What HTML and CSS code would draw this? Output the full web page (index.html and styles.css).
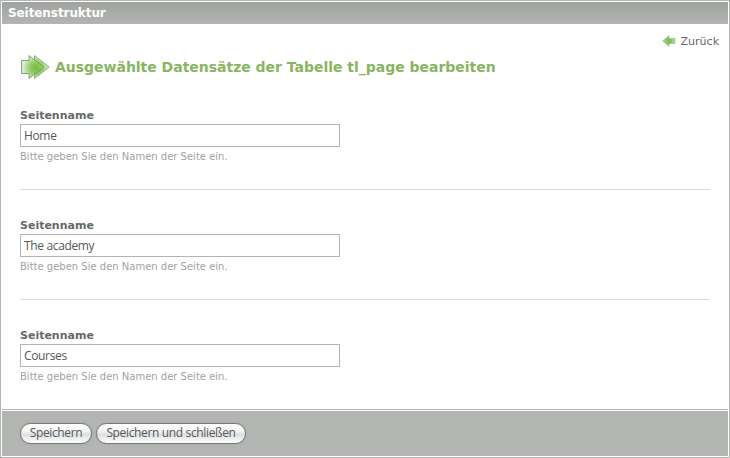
FILE: index.html
```html
<!DOCTYPE html>
<html lang="de">
<head>
<meta charset="utf-8">
<title>Seitenstruktur</title>
<link rel="stylesheet" href="styles.css">
</head>
<body>
<form class="panel">
  <h1 class="bar"><span>Seitenstruktur</span></h1>
  <main class="content">
    <div class="back"><svg width="14" height="12" viewBox="0 0 14 12"><defs><linearGradient id="b"><stop offset="0" stop-color="#a9d391"/><stop offset=".55" stop-color="#79bc52"/><stop offset="1" stop-color="#b9dca6"/></linearGradient></defs><path d="M.7 6 7 .7V3.500h6v5H7v2.800z" fill="url(#b)" stroke="#a3bf95" stroke-width=".8"/></svg><a class="back-text">Zurück</a></div>
    <h2 class="heading"><svg width="30" height="26" viewBox="0 0 30 26"><defs><radialGradient id="g" gradientUnits="userSpaceOnUse" cx="16" cy="14" r="13"><stop offset="0" stop-color="#76bd35"/><stop offset=".45" stop-color="#93cb66"/><stop offset="1" stop-color="#d9ebd0"/></radialGradient></defs><path d="M14.500 1.500 29.300 13 14.500 24.500z" fill="url(#g)" stroke="#7ea36c" stroke-width=".8"/><path d="M1.500 6.500h7.500v-5L24 13 9 24.500v-5H1.500z" fill="url(#g)" stroke="#6d9260" stroke-width=".8"/></svg><span>Ausgewählte Datensätze der Tabelle tl_page bearbeiten</span></h2>
    <section class="field"><label for="p1"><span>Seitenname</span></label><div class="input" id="p1"><span>Home</span></div><p><span>Bitte geben Sie den Namen der Seite ein.</span></p></section>
    <section class="field"><label for="p2"><span>Seitenname</span></label><div class="input" id="p2"><span>The academy</span></div><p><span>Bitte geben Sie den Namen der Seite ein.</span></p></section>
    <section class="field"><label for="p3"><span>Seitenname</span></label><div class="input" id="p3"><span>Courses</span></div><p><span>Bitte geben Sie den Namen der Seite ein.</span></p></section>
  </main>
  <footer class="actions"><button type="button" class="save">Speichern</button><button type="button" class="save-close">Speichern und schließen</button></footer>
</form>
</body>
</html>
```
FILE: styles.css
```css
* { box-sizing: border-box; }
body { margin: 0; background: #fff; color: #666966; font-family: "DejaVu Sans", Verdana, sans-serif; }
h1, h2, p { margin: 0; }
svg { display: block; flex: none; }
.panel { width: 730px; height: 458px; border: 1px solid #b3b5b3; padding: 1px; display: flex; flex-direction: column; }
.bar { height: 22px; padding-left: 6px; background: linear-gradient(#a1a3a1, #b3b5b2); color: #fff; font-size: 12px; line-height: 22px; letter-spacing: -0.08px; }
.content { height: 385px; padding: 0 18px; }
.back { height: 34px; margin-right: -9px; display: flex; justify-content: flex-end; align-items: center; gap: 5px; font-size: 11px; }
.heading { height: 26px; margin-top: -4px; display: flex; align-items: center; gap: 5px; color: #89b562; font-size: 14px; white-space: nowrap; letter-spacing: -0.02px; }
.field { height: 110px; border-bottom: 1px solid #d9dad9; padding-top: 28px; white-space: nowrap; }
.field:last-child { border-bottom: 0; }
.field label { display: block; height: 16px; font-size: 11px; line-height: 16px; font-weight: bold; }
.input { width: 320px; height: 23px; border: 1px solid #b3b5b3; padding-left: 3px; font: 12px/21px "Open Sans", sans-serif; letter-spacing: -0.35px; color: #555955; }
.field p { height: 20px; font-size: 10px; line-height: 20px; color: #a0a3a0; }
.actions { height: 47px; border-top: 1px solid #b3b5b3; padding: 13px 18px 0; background: #b3b5b2; box-shadow: inset 0 1px #fff; display: flex; align-items: flex-start; gap: 4px; }
button { height: 21px; padding: 0 0 2px; border: 1px solid #777977; border-radius: 11px; background: linear-gradient(#fff, #f2f2f3 40%, #dedfe1 55%, #fff); color: #555955; font: 12px/17px "Open Sans", sans-serif; letter-spacing: -0.35px; white-space: nowrap; box-shadow: 0 0 1px #777977; }
.save { width: 72px; }
.save-close { width: 150px; }
```
